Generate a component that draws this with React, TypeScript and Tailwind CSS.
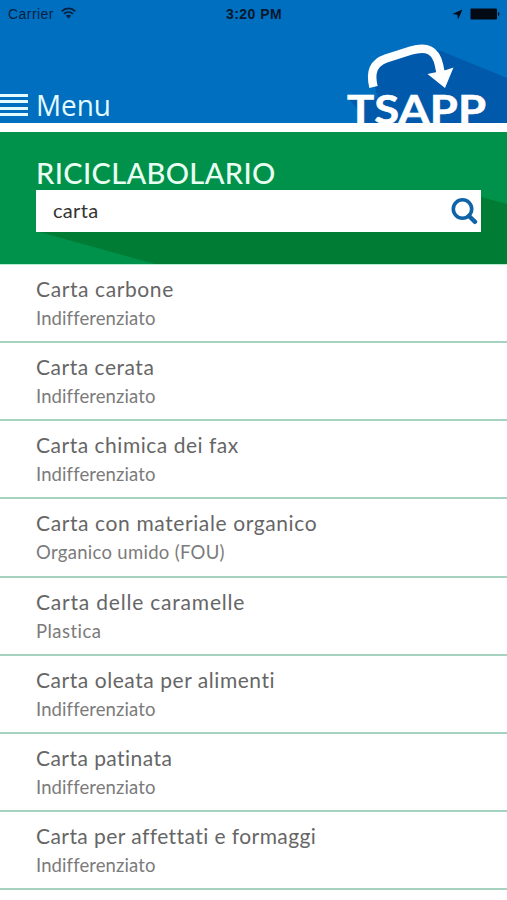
interface WasteItem {
  name: string;
  bin: string;
  nameTracking: string;
  binTracking: string;
}

const items: WasteItem[] = [
  { name: "Carta carbone", bin: "Indifferenziato", nameTracking: "tracking-[0.6px]", binTracking: "tracking-[0.1px]" },
  { name: "Carta cerata", bin: "Indifferenziato", nameTracking: "tracking-[0.52px]", binTracking: "tracking-[0.1px]" },
  { name: "Carta chimica dei fax", bin: "Indifferenziato", nameTracking: "tracking-[0.52px]", binTracking: "tracking-[0.1px]" },
  { name: "Carta con materiale organico", bin: "Organico umido (FOU)", nameTracking: "tracking-[0.61px]", binTracking: "tracking-[0.3px]" },
  { name: "Carta delle caramelle", bin: "Plastica", nameTracking: "tracking-[0.8px]", binTracking: "tracking-[0.45px]" },
  { name: "Carta oleata per alimenti", bin: "Indifferenziato", nameTracking: "tracking-[0.55px]", binTracking: "tracking-[0.1px]" },
  { name: "Carta patinata", bin: "Indifferenziato", nameTracking: "tracking-[0.45px]", binTracking: "tracking-[0.1px]" },
  { name: "Carta per affettati e formaggi", bin: "Indifferenziato", nameTracking: "tracking-[0.43px]", binTracking: "tracking-[0.1px]" },
];

const StatusBar = () => (
  <div className="grid h-7 grid-cols-3 items-center pl-2 pr-[7px] font-['Liberation_Sans',sans-serif] text-[14px] text-[#06213f]">
    <div className="flex items-center gap-[7px]">
      <span className="tracking-[0.45px]">Carrier</span>
      <svg className="-mt-0.5" width="15" height="12" viewBox="0 0 16 12" fill="none" stroke="currentColor" strokeWidth="2">
        <path d="M0.8 4.2C4.9 0.1 11.1 0.1 15.2 4.2" />
        <path d="M3.2 7C6 4.4 10 4.4 12.8 7" />
        <path d="M5.2 9C6.8 7.5 9.2 7.5 10.8 9L8 11.8Z" fill="currentColor" stroke="none" />
      </svg>
    </div>
    <span className="text-center font-bold tracking-[0.45px] text-[#06182e]">3:20 PM</span>
    <div className="flex items-center justify-end gap-[7px] text-[#020a14]">
      <svg width="11" height="11" viewBox="0 0 11 11" fill="currentColor">
        <path d="M10.5 0.5L6 10.5L5.3 5.7L0.5 5Z" />
      </svg>
      <svg width="30" height="12" viewBox="0 0 30 12" fill="currentColor">
        <rect x="0.5" y="0.5" width="26.5" height="11" rx="1" />
        <path d="M28 4C29.8 4.5 29.8 7.5 28 8Z" />
      </svg>
    </div>
  </div>
);

const Logo = () => (
  <svg className="shrink-0 overflow-visible" width="167" height="95" viewBox="340 28 167 95">
    <path d="M348 98H378L370 70L420 46L441 51L507 78V123H358V110Z" fill="#0059ab" />
    <path
      d="M373.5 87C370 73 373 63 386 58.5L411 50.5C427 46 436 50 439 65L441 75"
      fill="none"
      stroke="white"
      strokeWidth="8.5"
    />
    <path d="M427.5 74L437 72L446 70L453.5 67.5L445 88Z" fill="white" />
    <text
      x="347"
      y="124"
      fill="white"
      stroke="white"
      strokeWidth="0.6"
      textLength="139"
      lengthAdjust="spacingAndGlyphs"
      className="font-['Lato',sans-serif] text-[41px] font-bold"
    >
      TSAPP
    </text>
  </svg>
);

const SearchIcon = () => (
  <svg width="28" height="28" viewBox="0 0 28 28" fill="none" stroke="#1163a8">
    <circle cx="12.5" cy="12" r="9.2" strokeWidth="3.6" />
    <path d="M19 19L25 24.8" strokeWidth="4.4" strokeLinecap="round" />
  </svg>
);

const Header = () => (
  <header className="flex h-[132px] flex-col border-b-9 border-white bg-[#006fc0]">
    <StatusBar />
    <div className="flex flex-1 items-end justify-between">
      <button className="flex items-end gap-2 pb-1">
        <span className="flex w-7 flex-col gap-[3.3px] pb-[3px]">
          <span className="h-[3px] bg-[#e4fbff]" />
          <span className="h-[3px] bg-[#e4fbff]" />
          <span className="h-[3px] bg-[#e4fbff]" />
          <span className="h-[3px] bg-[#e4fbff]" />
        </span>
        <span className="origin-left scale-x-93 font-['Open_Sans',sans-serif] text-[30px] leading-[28px] text-[#e4fbff]">
          Menu
        </span>
      </button>
      <Logo />
    </div>
  </header>
);

const SearchPanel = () => (
  <section className="relative h-[133px] border-b border-[#b5ecd0] bg-[#00914a] px-9 pt-[26px]">
    <svg className="absolute inset-0" width="507" height="132" viewBox="0 0 507 132">
      <path d="M36 99L155 132H507V72L481 65Z" fill="#007c35" />
    </svg>
    <div className="relative w-[445px]">
      <h1 className="pb-0.5 font-['Lato',sans-serif] text-[29px] leading-[30px] font-medium tracking-[0.35px] text-[#e9fff2]">
        RICICLABOLARIO
      </h1>
      <div className="flex h-[41.5px] items-center justify-between bg-white pl-[17px] pr-[3px]">
        <span className="pb-[2px] font-['Lato',sans-serif] text-xl tracking-[0.3px] text-[#333]">carta</span>
        <SearchIcon />
      </div>
    </div>
  </section>
);

const App = () => {
  return (
    <div className="h-[900px] w-[507px] overflow-hidden bg-white">
      <Header />
      <SearchPanel />
      <ul className="font-['Lato',sans-serif]">
        {items.map((item) => (
          <li key={item.name} className="h-[78.15px] border-b-2 border-[#a6d3c0] pl-9 pt-[9px]">
            <p className={`text-[21px] leading-[29px] text-[#666] ${item.nameTracking}`}>{item.name}</p>
            <p className={`mt-px text-[18.5px] leading-[28px] text-[#7b7b7b] ${item.binTracking}`}>{item.bin}</p>
          </li>
        ))}
      </ul>
    </div>
  );
};

export default App;
